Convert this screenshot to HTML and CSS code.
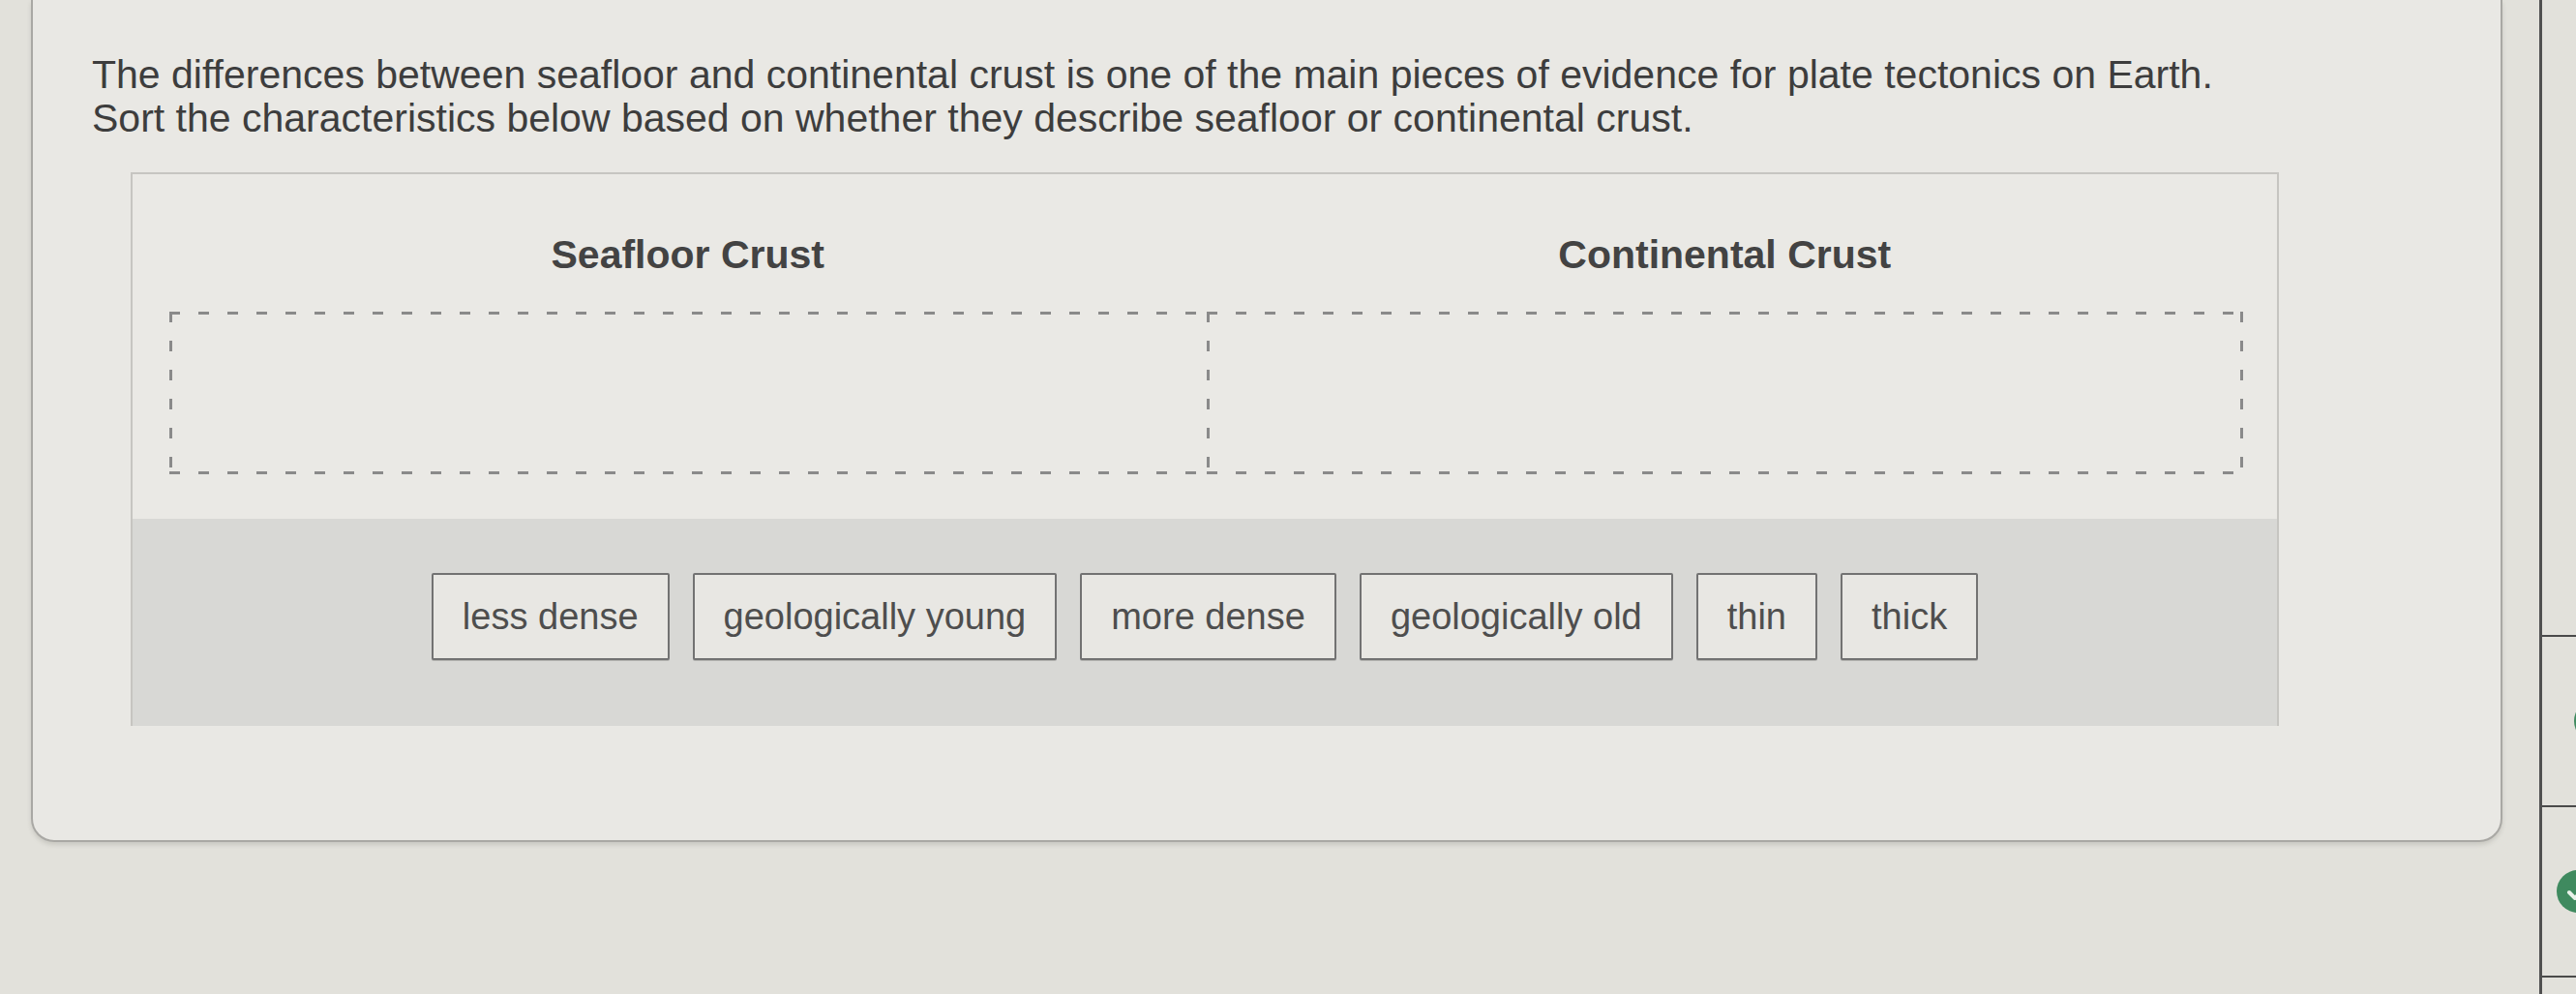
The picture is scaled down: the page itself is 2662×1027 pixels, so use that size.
FILE: index.html
```html
<!DOCTYPE html>
<html lang="en">
<head>
<meta charset="utf-8">
<title>Sort the characteristics</title>
<link rel="stylesheet" href="styles.css">
</head>
<body>
<div class="screen">
  <main class="card">
    <p class="prompt">The differences between seafloor and continental crust is one of the main pieces of evidence for plate tectonics on Earth.<br>Sort the characteristics below based on whether they describe seafloor or continental crust.</p>
    <section class="sorter">
      <div class="cols">
        <h2 class="col-title">Seafloor Crust</h2>
        <h2 class="col-title">Continental Crust</h2>
        <div class="drop"></div>
        <div class="drop drop-last"></div>
      </div>
      <div class="tray">
        <span class="tile">less dense</span>
        <span class="tile">geologically young</span>
        <span class="tile">more dense</span>
        <span class="tile">geologically old</span>
        <span class="tile">thin</span>
        <span class="tile">thick</span>
      </div>
    </section>
  </main>
  <aside class="side">
    <div class="side-row">
      <span class="dot dot-far"><svg viewBox="0 0 44 44" width="44" height="44"><path d="M13 23 l6 6 l12 -13" fill="none" stroke="#e8f2ea" stroke-width="4" stroke-linecap="round" stroke-linejoin="round"/></svg></span>
    </div>
    <div class="side-row">
      <span class="dot"><svg viewBox="0 0 44 44" width="44" height="44"><path d="M13 23 l6 6 l12 -13" fill="none" stroke="#e8f2ea" stroke-width="4" stroke-linecap="round" stroke-linejoin="round"/></svg></span>
    </div>
    <div class="side-row"></div>
  </aside>
</div>
</body>
</html>
```

FILE: styles.css
```css
html, body {
  margin: 0;
  padding: 0;
}

body {
  width: 2662px;
  height: 1027px;
  overflow: hidden;
  background: #e2e1db;
  font-family: "Liberation Sans", Arial, Helvetica, sans-serif;
  color: #3f3f3f;
}

.screen {
  display: flex;
  align-items: flex-start;
  height: 1027px;
}

.card {
  box-sizing: border-box;
  width: 2554px;
  height: 870px;
  margin-left: 32px;
  padding-top: 55px;
  background: #e9e8e4;
  border: 2px solid #a9a8a4;
  border-top: none;
  border-radius: 0 0 24px 24px;
  box-shadow: 0 3px 4px rgba(120, 118, 110, 0.22);
}

.prompt {
  margin: 0 0 33px 61px;
  font-size: 41px;
  line-height: 45px;
  color: #3d3d3d;
}

.sorter {
  margin: 0 229px 0 101px;
  border: 2px solid #c6c5c1;
  border-bottom: none;
  background: #eae9e5;
}

.cols {
  display: grid;
  grid-template-columns: 1fr 1fr;
  row-gap: 36px;
  padding: 61px 35px 0 38px;
}

.col-title {
  margin: 0;
  text-align: center;
  font-size: 41px;
  line-height: 45px;
  font-weight: 700;
  color: #434343;
}

.drop {
  height: 168px;
  background-image:
    repeating-linear-gradient(to right, #8a8a8a 0 11px, transparent 11px 30px),
    repeating-linear-gradient(to right, #8a8a8a 0 11px, transparent 11px 30px),
    repeating-linear-gradient(to bottom, #8a8a8a 0 11px, transparent 11px 30px);
  background-size: 100% 3px, 100% 3px, 3px 100%;
  background-position: left top, left bottom, left top;
  background-repeat: no-repeat;
}

.drop-last {
  background-image:
    repeating-linear-gradient(to right, #8a8a8a 0 11px, transparent 11px 30px),
    repeating-linear-gradient(to right, #8a8a8a 0 11px, transparent 11px 30px),
    repeating-linear-gradient(to bottom, #8a8a8a 0 11px, transparent 11px 30px),
    repeating-linear-gradient(to bottom, #8a8a8a 0 11px, transparent 11px 30px);
  background-size: 100% 3px, 100% 3px, 3px 100%, 3px 100%;
  background-position: left top, left bottom, left top, right top;
}

.tray {
  margin-top: 46px;
  padding: 56px 0 68px;
  background: #d8d8d5;
  display: flex;
  justify-content: center;
  gap: 24px;
}

.tile {
  box-sizing: border-box;
  height: 90px;
  padding: 0 30px;
  display: flex;
  align-items: center;
  background: #e8e7e3;
  border: 2px solid #727272;
  border-radius: 2px;
  box-shadow: 0 1px 0 rgba(0, 0, 0, 0.18);
  font-size: 38px;
  color: #4e4e4e;
}

.side {
  flex: 1;
  height: 1027px;
  margin-left: 38px;
  padding-top: 656px;
  box-sizing: border-box;
  border-left: 3px solid #505050;
  overflow: hidden;
}

.side-row {
  height: 174px;
  border-top: 2px solid #4a4a4a;
  display: flex;
  align-items: center;
  justify-content: flex-end;
}

.dot {
  width: 44px;
  height: 44px;
  border-radius: 50%;
  background: #3f8a5f;
  margin-right: -24px;
  flex: none;
  display: flex;
}

.dot-far {
  margin-right: -42px;
}
```
